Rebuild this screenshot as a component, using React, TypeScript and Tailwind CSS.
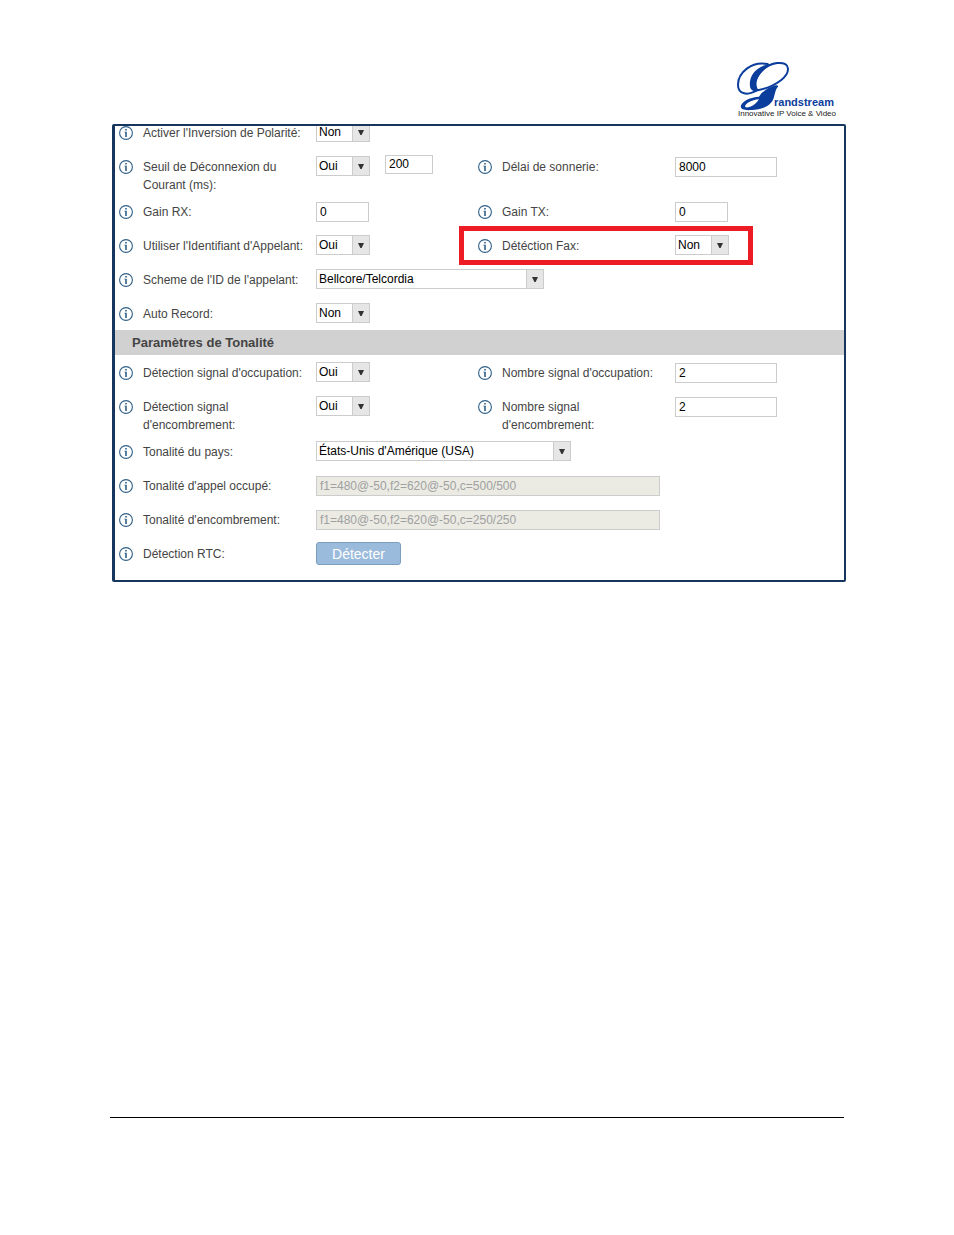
import { useId, type ReactNode } from "react";

const YES_NO = ["Oui", "Non"];

function InfoIcon() {
  return (
    <svg viewBox="0 0 14 14" className="mt-[11px] h-3.5 w-3.5 shrink-0" aria-hidden="true">
      <circle cx="7" cy="7" r="6.4" fill="#fff" stroke="#2f6088" strokeWidth="1.1" />
      <path d="M6.2 3h1.6v1.4H6.2zM5.4 5.7h2.4V11H6.2V6.5h-.8z" fill="#2f6088" />
    </svg>
  );
}

function Logo() {
  return (
    <svg viewBox="0 0 106 58" className="h-[58px] w-[106px]" role="img" aria-label="Grandstream">
      <g transform="scale(0.3333)">
        <g fill="none" stroke="#0b3d9c" strokeLinecap="round">
          <path d="M98 12C50 2 9 38 9 74c0 30 30 34 58 16" strokeWidth="6" />
          <path d="M62 92C50 60 84 14 126 9c46-4 38 32 12 52-18 14-46 26-76 31" strokeWidth="6" />
        </g>
        <g fill="#0b3d9c">
          <path d="M108 12C62 16 38 52 46 84c4 10 16 12 24 6C54 66 74 26 118 12z" />
          <path d="M122 76c-22 6-40 18-50 34-26 2-48 12-54 26-4 12 10 16 32 14 34-2 60-14 66-36l6-22c2-6 6-10 8-14-2-2-4-3-8-2zM72 118c-8 14-26 26-40 24-8-6 14-22 40-24z" />
        </g>
      </g>
      <text x="39" y="46" fontSize="11" fontWeight="700" fill="#0b3d9c">
        randstream
      </text>
      <text x="3" y="56" fontSize="8" fill="#222">
        Innovative IP Voice &amp; Video
      </text>
    </svg>
  );
}

interface FieldProps {
  label: string;
  wide?: boolean;
  highlighted?: boolean;
  children: (id: string) => ReactNode;
}

function Field({ label, wide, highlighted, children }: FieldProps) {
  const id = useId();
  return (
    <div className={`relative flex min-h-[34px] items-start pl-1 ${wide ? "col-span-2" : ""}`}>
      <InfoIcon />
      <label htmlFor={id} className="ml-2.5 w-[173px] shrink-0 pt-[9px] pr-2 text-[12px] leading-[18px] text-[#444]">
        {label}
      </label>
      {children(id)}
      {highlighted && (
        <div className="pointer-events-none absolute -top-0.5 -left-[15px] h-[39px] w-[294px] border-5 border-[#ed1c24]" />
      )}
    </div>
  );
}

interface SelectProps {
  id: string;
  value: string;
  options?: string[];
  width?: string;
}

function Select({ id, value, options = YES_NO, width = "w-[54px]" }: SelectProps) {
  return (
    <div className={`relative mt-[7px] h-5 shrink-0 ${width}`}>
      <select
        id={id}
        defaultValue={value}
        className="block h-full w-full appearance-none border border-[#ccc] bg-white pr-5 pl-0.5 text-[12px] leading-4 text-black"
      >
        {options.map((option) => (
          <option key={option}>{option}</option>
        ))}
      </select>
      <span className="pointer-events-none absolute inset-y-0 right-0 flex w-[18px] items-center justify-center border border-[#ccc] bg-[#e6e6e6]">
        <svg viewBox="0 0 6 5" className="h-[5px] w-1.5" aria-hidden="true">
          <path d="M0 0h6L3.6 5H2.4z" fill="#333" />
        </svg>
      </span>
    </div>
  );
}

interface TextInputProps {
  id?: string;
  value: string;
  width?: string;
  ariaLabel?: string;
  disabled?: boolean;
  raised?: boolean;
}

function TextInput({ id, value, width = "w-[102px]", ariaLabel, disabled, raised }: TextInputProps) {
  return (
    <input
      id={id}
      type="text"
      aria-label={ariaLabel}
      defaultValue={value}
      disabled={disabled}
      className={`shrink-0 border border-[#ccc] pl-[3px] text-[12px] leading-4 text-black disabled:bg-[#ebebe4] disabled:text-[#a0a0a0] ${
        raised ? "mt-1.5 ml-[15px] h-[19px] pb-0.5" : "mt-2 h-5"
      } ${width}`}
    />
  );
}

function SectionTitle({ children }: { children: ReactNode }) {
  return (
    <h2 className="bg-[#d1d1d1] pl-[17px] text-[13px] leading-[25px] font-bold text-[#444]">{children}</h2>
  );
}

export default function App() {
  return (
    <div className="flex min-h-screen flex-col bg-white pr-[108px] pl-28 font-['Liberation_Sans',Arial,sans-serif]">
      <header className="flex justify-end pt-[60px] pr-[5px] pb-1.5">
        <Logo />
      </header>

      <main className="overflow-hidden rounded-xs border-2 border-l-3 border-[#17365d] pb-2.5">
        {/* The first row is scrolled partly under the top edge */}
        <form className="-mt-[11px]">
          <div className="grid grid-cols-[359fr_370fr]">
            <Field label="Activer l'Inversion de Polarité:" wide>
              {(id) => <Select id={id} value="Non" />}
            </Field>

            <Field label="Seuil de Déconnexion du Courant (ms):">
              {(id) => (
                <>
                  <Select id={id} value="Oui" />
                  <TextInput value="200" width="w-12" ariaLabel="Courant (ms)" raised />
                </>
              )}
            </Field>
            <Field label="Délai de sonnerie:">{(id) => <TextInput id={id} value="8000" />}</Field>

            <Field label="Gain RX:">{(id) => <TextInput id={id} value="0" width="w-[53px]" />}</Field>
            <Field label="Gain TX:">{(id) => <TextInput id={id} value="0" width="w-[53px]" />}</Field>

            <Field label="Utiliser l'Identifiant d'Appelant:">{(id) => <Select id={id} value="Oui" />}</Field>
            <Field label="Détéction Fax:" highlighted>
              {(id) => <Select id={id} value="Non" />}
            </Field>

            <Field label="Scheme de l'ID de l'appelant:" wide>
              {(id) => (
                <Select id={id} value="Bellcore/Telcordia" options={["Bellcore/Telcordia"]} width="w-[228px]" />
              )}
            </Field>
            <Field label="Auto Record:" wide>
              {(id) => <Select id={id} value="Non" />}
            </Field>
          </div>

          <SectionTitle>Paramètres de Tonalité</SectionTitle>

          <div className="grid grid-cols-[359fr_370fr]">
            <Field label="Détection signal d'occupation:">{(id) => <Select id={id} value="Oui" />}</Field>
            <Field label="Nombre signal d'occupation:">{(id) => <TextInput id={id} value="2" />}</Field>

            <Field label="Détection signal d'encombrement:">{(id) => <Select id={id} value="Oui" />}</Field>
            <Field label="Nombre signal d'encombrement:">{(id) => <TextInput id={id} value="2" />}</Field>

            <Field label="Tonalité du pays:" wide>
              {(id) => (
                <Select
                  id={id}
                  value="États-Unis d'Amérique (USA)"
                  options={["États-Unis d'Amérique (USA)"]}
                  width="w-[255px]"
                />
              )}
            </Field>
            <Field label="Tonalité d'appel occupé:" wide>
              {(id) => <TextInput id={id} value="f1=480@-50,f2=620@-50,c=500/500" width="w-[344px]" disabled />}
            </Field>
            <Field label="Tonalité d'encombrement:" wide>
              {(id) => <TextInput id={id} value="f1=480@-50,f2=620@-50,c=250/250" width="w-[344px]" disabled />}
            </Field>
            <Field label="Détection RTC:" wide>
              {(id) => (
                <button
                  id={id}
                  type="button"
                  className="mt-1.5 h-[23px] w-[85px] rounded-[3px] border border-[#7d9dbd] bg-[#9bbbdc] text-[14px] leading-5 text-white"
                >
                  Détecter
                </button>
              )}
            </Field>
          </div>
        </form>
      </main>

      <footer className="mt-auto mr-0.5 mb-[117px] -ml-0.5 border-t border-black" />
    </div>
  );
}
